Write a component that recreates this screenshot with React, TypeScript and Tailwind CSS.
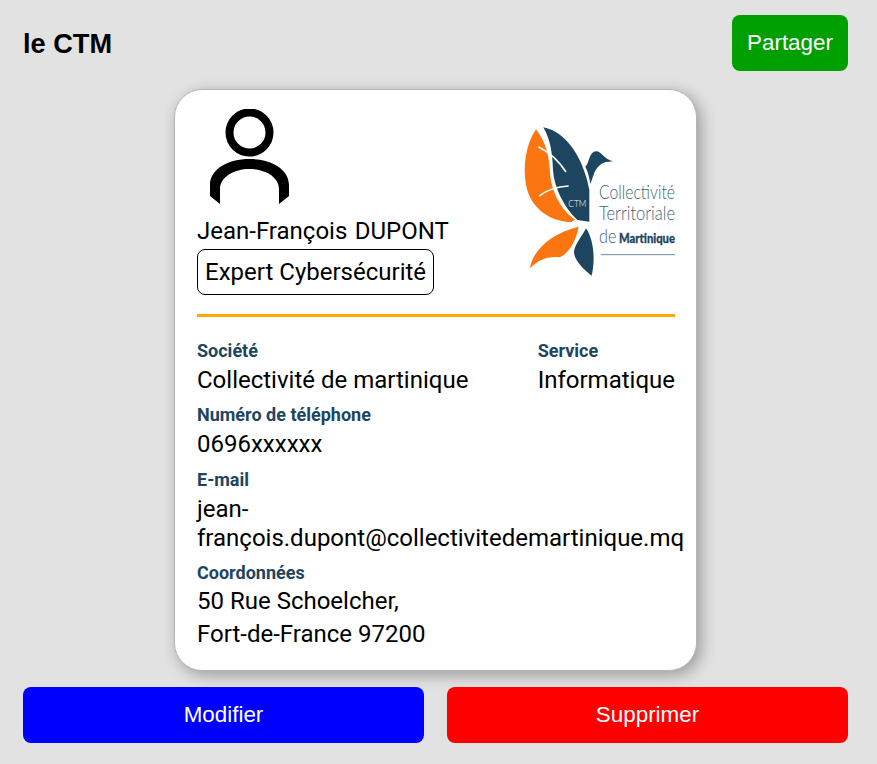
import React from "react";

const Logo: React.FC = () => (
  <svg viewBox="45 48 450 450" className="w-[150px] h-[150px] shrink-0 overflow-visible">
    <path
      d="M78 58C48 100 38 170 48 225C60 288 110 332 182 337L196 329C150 300 124 240 120 190C118 140 110 100 78 58Z"
      fill="#fb7510"
    />
    <path
      d="M100 52C172 66 222 150 238 240L238 335L202 330C160 290 132 230 129 180C127 130 122 90 100 52Z"
      fill="#1d4560"
    />
    <path d="M85 110C115 125 145 150 168 186" stroke="#fff" strokeWidth="5" fill="none" />
    <path d="M88 258C110 240 140 230 176 228" stroke="#fff" strokeWidth="5" fill="none" />
    <path
      d="M226 170C238 162 236 126 258 124C276 124 278 146 311 155C285 153 268 160 254 186L241 222C238 198 232 182 226 170Z"
      fill="#1d4560"
    />
    <path
      d="M60 475C66 425 120 370 206 350C198 392 178 428 150 442C110 438 85 450 60 475Z"
      fill="#fb7510"
    />
    <path
      d="M228 355C252 390 256 450 245 497C225 482 192 452 192 425C196 400 216 380 228 355Z"
      fill="#1d4560"
    />
    <text x="175" y="290" fontSize="26" fill="#fff" fontFamily="Lato" fontWeight="300" textLength="54" lengthAdjust="spacingAndGlyphs">
      CTM
    </text>
    <g fill="#3f6377" fontFamily="Lato" fontWeight="300">
      <text x="267" y="268" fontSize="58" textLength="228" lengthAdjust="spacingAndGlyphs">Collectivité</text>
      <text x="267" y="331" fontSize="58" textLength="228" lengthAdjust="spacingAndGlyphs">Territoriale</text>
      <text x="267" y="398" fontSize="58" textLength="52" lengthAdjust="spacingAndGlyphs">de</text>
    </g>
    <text x="327" y="398" fontSize="38" fontWeight="900" fill="#1d4560" stroke="#1d4560" strokeWidth="0.8" fontFamily="Lato" textLength="168" lengthAdjust="spacingAndGlyphs">
      Martinique
    </text>
    <path d="M272 434H495" stroke="#6d8b9b" strokeWidth="3" />
  </svg>
);

const PersonIcon: React.FC = () => (
  <svg viewBox="0 0 80 96" className="w-20 h-24 ml-[13px]">
    <circle cx="39.5" cy="23.5" r="20" fill="none" stroke="#000" strokeWidth="8" />
    <path d="M0 87V76C0 60 18 50 39.5 50C61 50 79 60 79 76V87L69 95V80C69 68 55 60 39.5 60C24 60 10 68 10 80V95Z" />
  </svg>
);

const Field: React.FC<{ label: string; children: React.ReactNode; className?: string }> = ({
  label,
  children,
  className,
}) => (
  <div className={className}>
    <div className="text-[18px] leading-[21px] font-bold text-[#1d4560]">{label}</div>
    <div className="text-[24px] leading-[29px] mt-[5px] text-black">{children}</div>
  </div>
);

export default function App() {
  return (
    <div className="min-h-[764px] bg-[#e2e2e2] pl-[23px] pr-[29px] pt-[15px] font-['Liberation_Sans',sans-serif]">
      <div className="flex items-center justify-between">
        <h1 className="text-[27.2px] font-bold text-black mt-[2px]">le CTM</h1>
        <button className="w-[116px] h-14 rounded-lg bg-[#009f00] text-white text-[22.4px]">Partager</button>
      </div>

      <div className="mt-[18px] ml-[151px] w-[523px] h-[582px] rounded-[28px] border border-[#b4b4b4] bg-white pl-[22px] pr-[21px] pt-[19px] shadow-[4px_4px_15px_rgba(0,0,0,0.32)] font-['Roboto',sans-serif]">
        <div className="flex justify-between">
          <div>
            <PersonIcon />
            <div className="text-[24px] leading-[29px] mt-[12px] text-black [word-spacing:1.5px]">Jean-François DUPONT</div>
            <div className="mt-[3px] w-fit h-[46px] rounded-lg border border-black px-[7px] flex items-center text-[24px] text-black">
              Expert Cybersécurité
            </div>
          </div>
          <div className="mt-[17px]">
            <Logo />
          </div>
        </div>

        <div className="h-[3px] bg-[#ffaa00] mt-[19px]" />

        <div className="flex justify-between mt-[23px]">
          <Field label="Société">Collectivité de martinique</Field>
          <Field label="Service">Informatique</Field>
        </div>
        <Field label="Numéro de téléphone" className="mt-[9px]">0696xxxxxx</Field>
        <Field label="E-mail" className="mt-[10px]">
          <div className="whitespace-nowrap">
            jean-
            <br />
            françois.dupont@collectivitedemartinique.mq
          </div>
        </Field>
        <Field label="Coordonnées" className="mt-[9px]">
          <div className="leading-[33px] -mt-[3px]">
            50 Rue Schoelcher,
            <br />
            Fort-de-France 97200
          </div>
        </Field>
      </div>

      <div className="flex gap-[23px] mt-4">
        <button className="flex-1 h-14 rounded-lg bg-[#0000ff] text-white text-[22.4px]">Modifier</button>
        <button className="flex-1 h-14 rounded-lg bg-[#ff0000] text-white text-[22.4px]">Supprimer</button>
      </div>
    </div>
  );
}
